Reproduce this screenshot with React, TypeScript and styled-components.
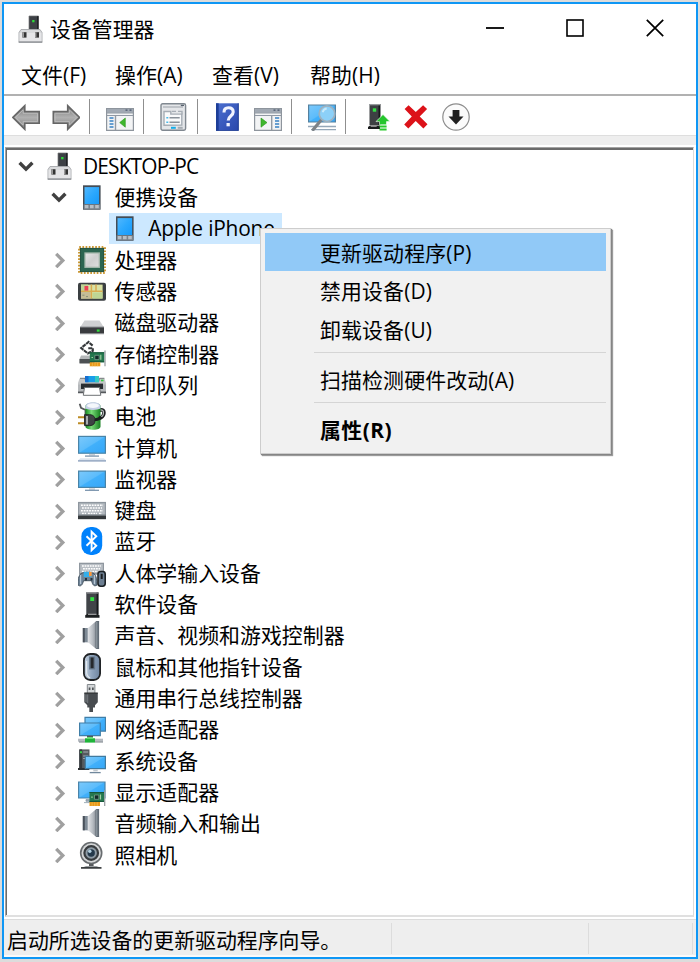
import React from "react";
import styled, { createGlobalStyle, css } from "styled-components";

const GlobalStyle = createGlobalStyle`
  * { box-sizing: border-box; }
  html, body { margin: 0; padding: 0; }
  body {
    width: 700px;
    height: 962px;
    overflow: hidden;
    background: #dcdcdc;
    font-family: "Open Sans", "Noto Sans CJK SC", sans-serif;
    font-size: 20.9px;
    color: #000;
  }
`;

/* ---------- window chrome ---------- */

const Frame = styled.div`
  width: 700px;
  height: 962px;
  padding: 2px 2px 3px;
  background: #dcdcdc;
`;

const Window = styled.div`
  position: relative;
  display: flex;
  flex-direction: column;
  width: 696px;
  height: 957px;
  border: 2px solid #0f97f5;
  background: #fff;
`;

const TitleBar = styled.header`
  display: flex;
  flex: none;
  align-items: center;
  height: 50px;
  padding-left: 13px;
`;

const Title = styled.h1`
  flex: 1;
  margin: 0 0 0 5px;
  font-size: 20.9px;
  font-weight: 400;
  line-height: 30px;
`;

const Controls = styled.div`
  display: flex;
  gap: 59.5px;
  padding-right: 30.5px;
  padding-bottom: 2px;
`;

const ControlButton = styled.button`
  display: flex;
  align-items: center;
  justify-content: center;
  width: 20px;
  height: 20px;
  margin: 0 0.3px;
  padding: 0;
  border: 0;
  background: none;
`;

const MenuBar = styled.nav`
  display: flex;
  flex: none;
  height: 40px;
  padding-left: 17px;
  line-height: 43px;
`;

const MenuBarItem = styled.span<{ $width: number }>`
  width: ${(p) => p.$width}px;
  letter-spacing: 0.1px;
  white-space: nowrap;
`;

const ToolBar = styled.div`
  display: flex;
  flex: none;
  height: 42px;
  padding: 7px 0 0 8px;
  border-top: 2px solid #b1b1b1;
  border-bottom: 1px solid #dedede;
`;

const ToolButton = styled.button`
  flex: none;
  width: 28px;
  height: 28px;
  margin-right: 12px;
  padding: 0;
  border: 0;
  background: none;
  line-height: 0;
`;

const ToolDivider = styled.span`
  flex: none;
  width: 1px;
  height: 35px;
  margin: -4px 16px 0 -3px;
  background: #8f8f8f;
`;

const Strip = styled.div`
  flex: none;
  height: 9px;
  background: #eee;
`;

/* ---------- tree ---------- */

const TreePanel = styled.main`
  flex: none;
  height: 770px;
  margin: 2px 2px 0 1px;
  border: 1px solid #a3a3a3;
  border-right: 1px solid #dcdcdc;
  border-bottom: 2px solid #e0e0e0;
  overflow: hidden;
`;

const TreeInner = styled.ul`
  height: 100%;
  margin: 0;
  padding: 0.4px 0 0;
  list-style: none;
  border-top: 2px solid #6b6b6b;
  border-left: 1.5px solid #6b6b6b;
`;

const Row = styled.li<{ $depth: number }>`
  display: flex;
  align-items: center;
  height: 31.33px;
  padding-left: ${(p) => 9 + p.$depth * 32.5}px;
`;

const Twisty = styled.span`
  display: flex;
  justify-content: center;
  width: 20px;
  margin-right: 3px;
`;

const Node = styled.span<{ $selected?: boolean }>`
  display: flex;
  align-items: center;
  height: 31px;
  padding-left: 6.5px;
  ${(p) =>
    p.$selected &&
    css`
      width: 173px;
      padding-left: 2.5px;
      background: #cce8ff;
    `}
`;

const NodeIcon = styled.span`
  width: 28px;
  height: 28px;
  margin-top: -1px;
  line-height: 0;
`;

const NodeLabel = styled.span<{ $inset: number; $spacing: number }>`
  padding-left: ${(p) => p.$inset}px;
  line-height: 31px;
  letter-spacing: ${(p) => p.$spacing}px;
  white-space: nowrap;
`;

/* ---------- status bar ---------- */

const StatusBar = styled.footer`
  display: grid;
  grid-template-columns: 387px 197px 104px;
  grid-template-rows: 31px;
  flex: 1;
  min-height: 0;
  margin-top: 2px;
  padding: 3px 0 0 1px;
  border-top: 1px solid #dcdcdc;
  border-bottom: 2px solid #fafafa;
  background: #eee;
`;

const StatusCell = styled.div`
  padding-left: 2px;
  line-height: 34px;
  border-right: 1.5px solid #dcdcdc;
  white-space: nowrap;
`;

/* ---------- context menu ---------- */

const ContextMenu = styled.div`
  position: absolute;
  left: 256px;
  top: 224px;
  width: 351px;
  height: 226px;
  padding: 4px;
  border: 1px solid #cdcdcd;
  background: #f1f1f1;
  box-shadow: 1px 1px 1px #858585, 2px 2px 1px #a0a0a0;
`;

const ContextItem = styled.div<{ $active?: boolean; $strong?: boolean }>`
  height: 38.4px;
  padding-left: 55px;
  line-height: ${(p) => (p.$strong ? 39 : 40)}px;
  letter-spacing: ${(p) => (p.$strong ? 0.45 : 0.15)}px;
  font-weight: ${(p) => (p.$strong ? 700 : 400)};
  background: ${(p) => (p.$active ? "#91c9f7" : "transparent")};
  white-space: nowrap;
`;

const ContextSeparator = styled.hr`
  height: 1px;
  margin: 3.5px 0 7.5px 49px;
  border: 0;
  background: #d5d5d5;
`;

/* ---------- icons ---------- */

const Svg = ({ children }: { children: React.ReactNode }) => (
  <svg width="28" height="28" viewBox="0 0 28 28" fill="none">
    {children}
  </svg>
);

const GradientDefs = styled.svg`
  position: absolute;
  width: 0;
  height: 0;
`;

const Gradients = () => (
  <GradientDefs>
    <defs>
      <linearGradient id="sky" x1="0" y1="0" x2="1" y2="1">
        <stop offset="0" stopColor="#7cc9fb" />
        <stop offset=".48" stopColor="#5cbcfb" />
        <stop offset=".52" stopColor="#41b0fb" />
        <stop offset="1" stopColor="#36a6f7" />
      </linearGradient>
      <linearGradient id="phone" x1="0" y1="0" x2="1" y2="1">
        <stop offset="0" stopColor="#51b7fd" />
        <stop offset=".5" stopColor="#2ba8fe" />
        <stop offset="1" stopColor="#1699fa" />
      </linearGradient>
      <linearGradient id="steel" x1="0" y1="0" x2="1" y2="0">
        <stop offset="0" stopColor="#e3e5e8" />
        <stop offset=".5" stopColor="#b5bac0" />
        <stop offset="1" stopColor="#6b727b" />
      </linearGradient>
      <linearGradient id="arrow" x1="0" y1="0" x2="0" y2="1">
        <stop offset="0" stopColor="#777" />
        <stop offset=".5" stopColor="#b0b0b0" />
        <stop offset="1" stopColor="#808080" />
      </linearGradient>
      <linearGradient id="help" x1="0" y1="0" x2="1" y2="1">
        <stop offset="0" stopColor="#4b6fd0" />
        <stop offset="1" stopColor="#2947ac" />
      </linearGradient>
      <linearGradient id="mouse" x1="0" y1="0" x2="1" y2="0">
        <stop offset="0" stopColor="#c5d2e0" />
        <stop offset=".5" stopColor="#8fa4bd" />
        <stop offset="1" stopColor="#6e849f" />
      </linearGradient>
      <linearGradient id="chip" x1="0" y1="0" x2="1" y2="1">
        <stop offset="0" stopColor="#e7e7e7" />
        <stop offset=".5" stopColor="#cfcfcf" />
        <stop offset="1" stopColor="#dedede" />
      </linearGradient>
      <linearGradient id="cell" x1="0" y1="0" x2="1" y2="0">
        <stop offset="0" stopColor="#178c22" />
        <stop offset=".4" stopColor="#79db78" />
        <stop offset="1" stopColor="#16801f" />
      </linearGradient>
    </defs>
  </GradientDefs>
);

const Expanded = () => (
  <svg width="16" height="12" viewBox="0 0 16 12">
    <path d="M1.6 2.8 8 9.2l6.4-6.4" fill="none" stroke="#404040" strokeWidth="3.4" />
  </svg>
);

const Collapsed = () => (
  <svg width="14" height="16" viewBox="0 0 14 16">
    <path d="M4.2 1.9 10.8 8.5l-6.6 6.6" fill="none" stroke="#a0a0a0" strokeWidth="3.3" />
  </svg>
);

const Computer = () => (
  <Svg>
    <path d="M12 1H21.5v14H12z" fill="#3d4045" stroke="#777" strokeWidth=".7" />
    <path d="M20 1.2h1.5V15H20z" fill="#202226" />
    <rect x="15.2" y="5" width="2.3" height="2.3" fill="#2ddc38" />
    <path d="M4 14.5h19l2 3v10H2v-10z" fill="#d9dadc" stroke="#a6a8ab" strokeWidth=".9" />
    <path d="M2.5 18h22v8h-22z" fill="#e5e5e7" />
    <rect x="5.5" y="17.2" width="4" height="5.4" fill="#333" />
    <rect x="18" y="17.2" width="4" height="5.4" fill="#333" />
    <rect x="5.5" y="17.2" width="1.5" height="5.4" fill="#9a9a9a" />
    <rect x="18" y="17.2" width="1.5" height="5.4" fill="#9a9a9a" />
    <path d="M1.7 26.3h23.5v1.4H1.7z" fill="#96999c" />
  </Svg>
);

const Phone = () => (
  <Svg>
    <rect x="5" y="2.3" width="17.6" height="24.4" fill="#444c55" />
    <rect x="6.5" y="4.1" width="14.6" height="17" fill="url(#phone)" />
    <rect x="5.6" y="21.3" width="16.4" height="4.8" fill="#7b838c" />
    <path d="M6.8 22h3.6v3.2H6.8zM12 22h3.6v3.2H12zM17.2 22h3.6v3.2h-3.6z" fill="#b6bec6" />
  </Svg>
);

const Processor = () => (
  <Svg>
    <rect x="1.2" y="1.2" width="25.6" height="25.6" stroke="#cf9a36" strokeWidth="2.4" strokeDasharray="1.7 1.5" />
    <rect x="2.4" y="2.4" width="23.2" height="23.2" fill="#2c6550" stroke="#1f4f3c" strokeWidth="1" />
    <rect x="7" y="7" width="14.3" height="14.3" fill="url(#chip)" stroke="#a5b8ac" strokeWidth="1.3" />
  </Svg>
);

const Sensor = () => (
  <Svg>
    <rect y="5.7" width="28" height="18" rx="2" fill="#3b3f42" />
    <rect x="3" y="7.6" width="21.6" height="14" fill="#d9e2a4" />
    <path d="M3 7.6h7v6H3zM14.5 15.5h10v6h-10z" fill="#bed594" />
    <path d="M3 15h9.6v6.6H3z" fill="#c5bd97" />
    <path d="M13.4 7.6v14M3 14.3h21.6M18 14.5v-7" stroke="#d9ab50" strokeWidth="1.5" />
    <path d="M6.5 9h3.8v4.6H6.5z" fill="#ed4055" />
    <path d="M4.3 18.2h2.2M8 19.6h2" stroke="#889077" />
  </Svg>
);

const Disk = () => (
  <Svg>
    <path d="M6.5 12.4h15L26 19.5H2z" fill="#cfd0d2" />
    <path d="M2 19h24v6.7H2z" fill="#393b3e" />
    <path d="M2 18.6h24v1H2zM2 25.3h24v1H2z" fill="#909295" />
    <rect x="18.8" y="21.5" width="2.8" height="2.2" fill="#31dc3c" />
  </Svg>
);

const Card = ({ x, y }: { x: number; y: number }) => (
  <g transform={`translate(${x} ${y})`}>
    <path d="M0 0h14.5v10H0z" fill="#24774e" />
    <path d="M0 0h14.5v1H0zM0 9h14.5v1H0z" fill="#16563a" />
    <path d="M5 3h4.3v4.3H5z" fill="#132c29" stroke="#85a697" strokeWidth=".7" />
    <path d="M1.7 5.2h1.5M11 2.5v5" stroke="#9fcf9f" strokeWidth="1.2" />
    <path d="M0 10h10.5v4H0z" fill="#e8991a" />
    <path d="M2.6 10.3v3.7M5.2 10.3v3.7M7.8 10.3v3.7" stroke="#f5c35a" strokeWidth=".6" />
    <path d="M15.2-1.7V14" stroke="#9aa0a3" strokeWidth="1.3" />
  </g>
);

const Storage = () => (
  <Svg>
    <path d="M3 15.5h12l2 4v3.5H1.5v-4z" fill="#b4b7b9" />
    <path d="M1.5 19h14v4.5h-14z" fill="#4c5053" />
    <path d="m15.8 5.6-5-4.6L1.8 8l8 7.4 7-4V5.6z" fill="#fff" />
    <path d="m14.6 5.6-4-3.6L3.2 8l6.6 5.4 5-2.6V8.2h-5" stroke="#34373a" strokeWidth="2.1" strokeDasharray="4 .6" />
    <Card x={11.8} y={12.3} />
  </Svg>
);

const Printer = () => (
  <Svg>
    <path d="M1.5 7.5H7v3.8h14.3V7.5h5.2L28 12v10H0V12z" fill="#c5c7c9" />
    <path d="M2 7.3h5l.7 3.5h13l.7-3.5h5" stroke="#717477" strokeWidth="1" />
    <path d="M0 13.5h28v7H0z" fill="#b5b8bb" />
    <path d="M7 5h14v6.2H7z" fill="#189ee9" />
    <path d="M7 5h3.5v6.2H7z" fill="#176fd0" />
    <path d="M17 5h4v6.2h-4z" fill="#35c8c1" />
    <path d="M3 12.6h22v5.4H3z" fill="#292d31" />
    <path d="M6.5 16.5h15l1.3 7.8H5.3z" fill="#fff" stroke="#6f7275" strokeWidth="1" />
    <path d="M23 8.7h2.6v1.6H23z" fill="#32cf40" />
    <path d="M0 21.3h5.3M22.7 21.3H28" stroke="#55585c" strokeWidth="1.8" />
  </Svg>
);

const Battery = () => (
  <Svg>
    <path d="M1.7 1.7 3 5.8 7.5 8v5" stroke="#56595b" strokeWidth="1.8" />
    <path d="M19 8.5c7-1.7 7.3.3 6.8 3.5S23 16 20 17" stroke="#1f2324" strokeWidth="3.6" />
    <path d="M20 8.2c5-1.2 5.9.8 5.4 3.6s-2.4 3.4-4.4 4" stroke="#b0b4b6" strokeWidth="1.2" />
    <path d="M7.5 4.5C7.5 2 10.5.8 15 .8s7.5 1.3 7.5 3.7v20c0 2-3 3.3-7 3.3s-8-1.2-8-3z" fill="url(#cell)" />
    <path d="M7.5 4.3C7.5 1.8 10.5.2 15 .2s7.5 1.6 7.5 4.1v2.3c-3 1.9-12 1.9-15 0z" fill="#c6cee6" />
    <ellipse cx="15" cy="3.6" rx="6" ry="2.3" fill="#f4f7fb" />
    <path d="M0 15.3h7.5M0 21.3h7.5" stroke="#bd8c25" strokeWidth="1.9" />
    <path d="M6.5 12.7h5c4.3 0 5.5 2.5 5.5 5.5s-1.2 5.4-5.5 5.4h-5z" fill="#3e4244" stroke="#151718" strokeWidth=".8" />
    <path d="M9 14v8.5" stroke="#a9adaf" strokeWidth="2" />
    <path d="M17 17.5c3 .5 4.5-.5 6-3" stroke="#1a1d1e" strokeWidth="3" />
  </Svg>
);

const Screen = ({ y, h }: { y: number; h: number }) => (
  <>
    <rect x=".6" y={y + 0.6} width="26.8" height={h - 1.2} fill="url(#sky)" stroke="#4984a8" strokeWidth="1.2" />
    <path d={`M11 ${y + h + 0.3}h6v1.5h-6z`} fill="#c6ccd3" />
    <path d={`M7 ${y + h + 2.3}h14`} stroke="#7b94ad" strokeWidth="1.3" />
  </>
);

const Pc = () => (
  <Svg>
    <Screen y={1.8} h={18} />
    <path d="M2.3 24.3h23.4L28 26.3v1.2H0v-1.2z" fill="#dce4ee" />
    <path d="M0 26.9h28" stroke="#7d94b4" strokeWidth="1.1" />
  </Svg>
);

const Monitor = () => (
  <Svg>
    <Screen y={5.5} h={17.5} />
  </Svg>
);

const Keyboard = () => (
  <Svg>
    <path d="M0 5.9h28v13.8H0z" fill="#8f979f" />
    <path d="M1.2 7.3h25.6V19H1.2z" fill="#b4bac0" />
    <path d="M3 9.2h22M4 12h20M3 14.8h22M4 17.5h4M10 17.5h9M21 17.5h3" stroke="#fff" strokeWidth="1.5" strokeDasharray="1.8 .9" />
    <path d="M0 19.4h28v3.8H0z" fill="#34383b" />
    <path d="M0 19h28" stroke="#747c82" />
  </Svg>
);

const Bluetooth = () => (
  <Svg>
    <rect x="3.4" width="20.8" height="28" rx="9.2" fill="#0082fc" />
    <path d="m8.5 9.2 9.8 9.5-4.7 4.6V4.7l4.7 4.6-9.8 9.5" stroke="#fff" strokeWidth="1.9" />
  </Svg>
);

const Hid = () => (
  <Svg>
    <path d="M1 3.7h25v12H1z" fill="#8f979f" />
    <path d="M2.2 5h22.6v9H2.2z" fill="#b8bec4" />
    <path d="M4 7h19M5 9.7h17M4 12.4h19" stroke="#fff" strokeWidth="1.4" strokeDasharray="1.8 .8" />
    <path d="M3 14.4c4-1.7 9-1.7 13 0 2.5 3 3.3 7 3 11.5-2.5 2-4.5.5-5.4-4.2H5.5C4.5 26.5 2.3 28 0 26c-.5-5 .5-9 3-11.6z" fill="#6f8396" stroke="#3d4c58" strokeWidth=".9" />
    <path d="M2.6 16v9M16.5 16v9" stroke="#b8c7d4" strokeWidth="1.2" />
    <path d="M5.7 12.8h8v5.2h-8z" fill="#34aeea" />
    <path d="M11 12.8h2.7v4.4H11z" fill="#ff9637" />
    <path d="M7 19h2v2.4H7zM12.5 19h2v2.4h-2z" fill="#25323b" />
    <rect x="20" y="12.5" width="7.2" height="14.7" rx="2.6" fill="#6d7f92" stroke="#1c2226" strokeWidth="1.6" />
    <path d="M23.7 14.8V20" stroke="#191d20" strokeWidth="2" />
  </Svg>
);

const Tower = () => (
  <Svg>
    <path d="M8 2.4h12.4v22H8z" fill="#414448" />
    <path d="M18.6 2.4h1.8v22h-1.8z" fill="#16181a" />
    <path d="M8 2.4h12.4v1.2H8z" fill="#909396" />
    <path d="M8 3h1v21H8z" fill="#777b7e" />
    <rect x="12.3" y="7.2" width="3.8" height="3.8" fill="#33e141" />
    <path d="M7.2 25.2 9 24h10.5l2 1.2v2.6H7.2z" fill="#1c1f20" />
    <path d="M10 24.3h8.5" stroke="#ccc" strokeWidth=".9" />
  </Svg>
);

const Speaker = () => (
  <Svg>
    <path d="M4.8 7h6v14.3h-6z" fill="#7f8b96" />
    <path d="M4.8 7h2v14.3h-2z" fill="#49515a" />
    <path d="M9.7 7.2 18 .2h2.3v27.6H18L9.7 21z" fill="url(#steel)" />
    <path d="M17.5.9v26.2l1.3.8h2.3V.1h-2.3z" fill="#626c76" />
    <path d="M18.8 1v26" stroke="#a5adb5" strokeWidth=".8" />
  </Svg>
);

const Mouse = () => (
  <Svg>
    <rect x="5.9" y="1" width="16.2" height="26" rx="6.4" fill="url(#mouse)" stroke="#202326" strokeWidth="1.8" />
    <path d="M8.6 8v11c0 3 1.5 5 3.5 6" stroke="#e2e9ef" strokeWidth="1.2" />
    <path d="M11 3.5h6.2v13H11z" fill="#66788b" />
    <rect x="12.6" y="4.5" width="3" height="10.7" fill="#26292c" />
  </Svg>
);

const Usb = () => (
  <Svg>
    <path d="M9.3.5h7.6v9H9.3z" fill="#d3d6d8" stroke="#84898d" strokeWidth="1" />
    <path d="M10.7 3.5h1.7v2.4h-1.7zM14 3.5h1.7v2.4H14z" fill="#505558" />
    <path d="M6.3 9h13.5v9.3L17 21.3v2.3h-2V28h-3.7v-4.4h-2v-2.3l-3-3z" fill="#484c50" />
    <path d="M8 10.5V18M9.7 10.5V19" stroke="#777c80" strokeWidth="1" />
    <path d="M6.3 9h13.5" stroke="#262829" />
  </Svg>
);

const Network = () => (
  <Svg>
    <path d="M7 2.4h20.5v13.7H7z" fill="url(#sky)" stroke="#407ea7" strokeWidth="1.2" />
    <path d="M1.6 8h20.7v12.7H1.6z" fill="url(#sky)" stroke="#407ea7" strokeWidth="1.2" />
    <path d="M9 21.5h6M12 21v5" stroke="#4b5961" strokeWidth="1.5" />
    <path d="M0 25.2h25" stroke="#b5bac0" strokeWidth="3" />
    <path d="M7 23.3h10v4.3H7z" fill="#1fb43a" />
    <path d="M9 22h6v2H9z" fill="#65db72" />
    <path d="M1 27h6M17 27h8" stroke="#747d84" strokeWidth="1" />
  </Svg>
);

const SystemDevice = () => (
  <Svg>
    <path d="M1 2.4h10.5v20.4H1z" fill="#555a5e" />
    <path d="M1.7 2.4h2.4v20.4H1.7z" fill="#34383a" />
    <path d="M5.2 5h5M5.2 9h5M5.2 11.5h5" stroke="#a7adb1" strokeWidth="1.2" />
    <path d="M2 4.2h2v2H2z" fill="#37d647" />
    <path d="M0 22h11" stroke="#2d3032" strokeWidth="2" />
    <path d="M7.3 9.3h20.1v12.4H7.3z" fill="url(#sky)" stroke="#407a9f" strokeWidth="1.2" />
    <path d="M15.3 22.3h4.4v2h-4.4z" fill="#bfc7ce" />
    <path d="M11.7 25.6h11" stroke="#71889c" strokeWidth="1.3" />
  </Svg>
);

const DisplayAdapter = () => (
  <Svg>
    <path d="M.6 4H27v16H.6z" fill="url(#sky)" stroke="#4a84a9" strokeWidth="1.2" />
    <path d="M8 21.6h4v1.7H8zM6 24.6h6" fill="#9da9b3" stroke="#8799a7" strokeWidth=".8" />
    <Card x={11.5} y={14} />
  </Svg>
);

const Camera = () => (
  <Svg>
    <path d="M11 22h4.6v4H11z" fill="#55595c" />
    <path d="M4 26.7 8 25h10.5l4 1.7" fill="#9a9ea1" />
    <path d="M3 26.9h20.5" stroke="#2c2f31" strokeWidth="1.6" />
    <circle cx="13.2" cy="12" r="11.3" fill="#686c6f" />
    <circle cx="13.2" cy="12" r="9.7" fill="#d4d6d7" />
    <circle cx="13.2" cy="12" r="6.8" fill="#8e9ba5" stroke="#383c3f" strokeWidth="2.2" />
    <circle cx="13.2" cy="12" r="3.7" fill="#24394b" />
    <circle cx="11.8" cy="10.3" r="1.7" fill="#b2cfdf" />
  </Svg>
);

const ArrowShape = () => (
  <>
    <path d="M.9 14.4 12.8 2.6v6h14.4v11.7H12.8v6z" fill="url(#arrow)" stroke="#666" strokeWidth="1.6" />
    <path d="m3.6 14.4 7.5-7.5v3.4h14.4v8.3H11.1v3.4z" stroke="#c0c0c0" strokeWidth=".8" />
  </>
);

const BackArrow = () => (
  <Svg>
    <ArrowShape />
  </Svg>
);

const ForwardArrow = () => (
  <Svg>
    <g transform="translate(28.5 0) scale(-1 1)">
      <ArrowShape />
    </g>
  </Svg>
);

const PaneWindow = ({ flipped }: { flipped?: boolean }) => (
  <Svg>
    <path d="M.6 5.6h26.8v21.8H.6z" fill="#f3f4f5" stroke="#8e959d" strokeWidth="1.2" />
    <path d="M1 6h26v3.6H1z" fill="#a1a9b3" />
    <path d="M19.5 7.2h2M23.5 7.2h2" stroke="#46536a" strokeWidth="1.3" />
    <path d="M1 9.9h26M1 12.5h26" stroke="#9199a4" strokeWidth="1.2" />
    {flipped ? (
      <>
        <path d="M17.7 13v14" stroke="#929aa3" strokeWidth="1.4" />
        <path d="M21 15h4.2M21 18h4.2M21 21h4.2M21 24h4.2" stroke="#3981c4" strokeWidth="1.5" />
        <path d="M7 15v9.2l6-4.6z" fill="#3fb72d" stroke="#289619" strokeWidth=".6" />
      </>
    ) : (
      <>
        <path d="M9.5 13v14" stroke="#929aa3" strokeWidth="1.4" />
        <path d="M3.5 15h4M3.5 18h4M3.5 21h4M3.5 24h4" stroke="#3981c4" strokeWidth="1.5" />
        <path d="M19.3 15v9.2l-5.6-4.6z" fill="#3fb72d" stroke="#289619" strokeWidth=".6" />
      </>
    )}
  </Svg>
);

const Properties = () => (
  <Svg>
    <rect x="1" y=".8" width="24.6" height="26.4" rx="1.6" fill="#e4e6e9" stroke="#808890" strokeWidth="1.4" />
    <path d="M3 4h20" stroke="#a6acb3" strokeWidth="1.2" />
    <path d="M20.8 2.4H24" stroke="#56616e" strokeWidth="1.3" />
    <path d="M4 22.2V8.5h6.8v2.6h11v11z" fill="#f9fafb" stroke="#a6adb5" strokeWidth="1.4" />
    <path d="M12 8.4h4M18 8.4h4v3" stroke="#a6adb5" strokeWidth="1.4" />
    <path d="M9.5 14.7h10.2M9.5 19.2h10.2" stroke="#89919a" strokeWidth="1.4" />
    <path d="M6.3 14.7h2M6.3 19.2h2" stroke="#4bb9e8" strokeWidth="1.6" />
    <path d="M11 23.8h4.8v2H11z" fill="#12aeea" />
    <path d="M17.7 23.8h5v2h-5z" fill="#a4abb2" />
  </Svg>
);

const Help = () => (
  <Svg>
    <path d="M2 .3h22.7v27.4H2z" fill="url(#help)" />
    <path d="M2 .3h2.7v27.4H2z" fill="#1d3e98" />
    <path d="M24.2.3v27.4H2" stroke="#254396" />
    <path d="M10 9.4c0-3.5 2-4.6 4.4-4.6 2.8 0 4.8 1.4 4.8 4.2 0 4.2-5 3.8-5 8.5" stroke="#f0f3ff" strokeWidth="3.1" />
    <rect x="12.5" y="20" width="3.3" height="3.3" fill="#f0f3ff" />
  </Svg>
);

const Scan = () => (
  <Svg>
    <path d="M.6 2h26.8v17H.6z" fill="url(#sky)" stroke="#54809e" strokeWidth="1.2" />
    <path d="M0 23.5h28M3 26.6h25" stroke="#95a7b8" strokeWidth="1.4" />
    <path d="m12.8 17.5-7.5 9" stroke="#7d8388" strokeWidth="3.2" strokeLinecap="round" />
    <circle cx="19" cy="10.7" r="7.8" fill="#8cd0f8" stroke="#9db1bf" strokeWidth="1.7" />
    <path d="M14.7 9.3c.4-2 2-3.5 4-3.8" stroke="#c9eafb" strokeWidth="1.8" />
  </Svg>
);

const UpdateDriver = () => (
  <Svg>
    <path d="M7.5 1h10.8v21H7.5z" fill="#3d4043" />
    <path d="M16.5 1h1.8v21h-1.8z" fill="#17191b" />
    <path d="M7.5 1h10.8v1.3H7.5z" fill="#969a9d" />
    <rect x="10.8" y="5.3" width="3.4" height="3.4" fill="#32e043" />
    <path d="m6 24 2-1.5h10V26H6z" fill="#191b1d" />
    <path d="M8.7 23.3h6" stroke="#c8c8c8" strokeWidth=".8" />
    <path d="m21 11.5 7 7.1h-3.5v3.2h-7v-3.2H14z" fill="#25c52d" stroke="#fff" strokeWidth=".6" />
    <path d="M17.5 23.5h7.1M17.5 26.6h7.1" stroke="#28c92c" strokeWidth="2" />
  </Svg>
);

const Remove = () => (
  <Svg>
    <path d="M2.6 6 6.6 2.2l7.2 6.9 7.3-6.9 4 3.8-7.4 7.5 7.8 7.7-4.1 4.3-7.7-7.6-7.4 7.6-4.1-4 7.6-8z" fill="#dc1219" />
  </Svg>
);

const Disable = () => (
  <Svg>
    <circle cx="14" cy="14" r="13.2" fill="#fbfbfb" stroke="#8d8d8d" strokeWidth="1.2" />
    <path d="M10.6 7h6.8v6.5h4.1L14 21.4l-7.5-7.9h4.1z" fill="#202020" />
  </Svg>
);

/* ---------- content ---------- */

const menus: [string, number][] = [
  ["文件(F)", 94],
  ["操作(A)", 97],
  ["查看(V)", 98],
  ["帮助(H)", 90],
];

const categories: [string, React.ComponentType][] = [
  ["处理器", Processor],
  ["传感器", Sensor],
  ["磁盘驱动器", Disk],
  ["存储控制器", Storage],
  ["打印队列", Printer],
  ["电池", Battery],
  ["计算机", Pc],
  ["监视器", Monitor],
  ["键盘", Keyboard],
  ["蓝牙", Bluetooth],
  ["人体学输入设备", Hid],
  ["软件设备", Tower],
  ["声音、视频和游戏控制器", Speaker],
  ["鼠标和其他指针设备", Mouse],
  ["通用串行总线控制器", Usb],
  ["网络适配器", Network],
  ["系统设备", SystemDevice],
  ["显示适配器", DisplayAdapter],
  ["音频输入和输出", Speaker],
  ["照相机", Camera],
];

type TreeRowProps = {
  depth: number;
  label: string;
  icon: React.ComponentType;
  state?: "open" | "closed";
  selected?: boolean;
  inset?: number;
  spacing?: number;
};

const TreeRow = ({ depth, label, icon: Icon, state, selected, inset = 8.5, spacing = 0.03 }: TreeRowProps) => (
  <Row $depth={depth}>
    {state && <Twisty>{state === "open" ? <Expanded /> : <Collapsed />}</Twisty>}
    <Node $selected={selected}>
      <NodeIcon>
        <Icon />
      </NodeIcon>
      <NodeLabel $inset={inset} $spacing={spacing}>
        {label}
      </NodeLabel>
    </Node>
  </Row>
);

export default function App() {
  return (
    <Frame>
      <GlobalStyle />
      <Gradients />
      <Window>
        <TitleBar>
          <Computer />
          <Title>设备管理器</Title>
          <Controls>
            <ControlButton aria-label="最小化">
              <svg width="20" height="20">
                <path d="M1 10h18" stroke="#000" strokeWidth="1.8" />
              </svg>
            </ControlButton>
            <ControlButton aria-label="最大化">
              <svg width="20" height="20">
                <rect x="2" y="2" width="16" height="16" fill="none" stroke="#000" strokeWidth="1.6" />
              </svg>
            </ControlButton>
            <ControlButton aria-label="关闭">
              <svg width="20" height="20">
                <path d="m1.8 1.8 16.4 16.4M18.2 1.8 1.8 18.2" stroke="#000" strokeWidth="1.7" />
              </svg>
            </ControlButton>
          </Controls>
        </TitleBar>
        <MenuBar>
          {menus.map(([name, width]) => (
            <MenuBarItem key={name} $width={width}>
              {name}
            </MenuBarItem>
          ))}
        </MenuBar>
        <ToolBar>
          <ToolButton><BackArrow /></ToolButton>
          <ToolButton><ForwardArrow /></ToolButton>
          <ToolDivider />
          <ToolButton><PaneWindow /></ToolButton>
          <ToolDivider />
          <ToolButton><Properties /></ToolButton>
          <ToolDivider />
          <ToolButton><Help /></ToolButton>
          <ToolButton><PaneWindow flipped /></ToolButton>
          <ToolDivider />
          <ToolButton><Scan /></ToolButton>
          <ToolDivider />
          <ToolButton><UpdateDriver /></ToolButton>
          <ToolButton><Remove /></ToolButton>
          <ToolButton><Disable /></ToolButton>
        </ToolBar>
        <Strip />
        <TreePanel>
          <TreeInner>
            <TreeRow depth={0} label="DESKTOP-PC" icon={Computer} state="open" inset={9.5} spacing={-0.85} />
            <TreeRow depth={1} label="便携设备" icon={Phone} state="open" />
            <TreeRow depth={2.85} label="Apple iPhone" icon={Phone} selected inset={9} spacing={-0.2} />
            {categories.map(([label, icon]) => (
              <TreeRow key={label} depth={1} label={label} icon={icon} state="closed" />
            ))}
          </TreeInner>
        </TreePanel>
        <StatusBar>
          <StatusCell>启动所选设备的更新驱动程序向导。</StatusCell>
          <StatusCell />
          <StatusCell />
        </StatusBar>
        <ContextMenu>
          <ContextItem $active>更新驱动程序(P)</ContextItem>
          <ContextItem>禁用设备(D)</ContextItem>
          <ContextItem>卸载设备(U)</ContextItem>
          <ContextSeparator />
          <ContextItem>扫描检测硬件改动(A)</ContextItem>
          <ContextSeparator />
          <ContextItem $strong>属性(R)</ContextItem>
        </ContextMenu>
      </Window>
    </Frame>
  );
}
